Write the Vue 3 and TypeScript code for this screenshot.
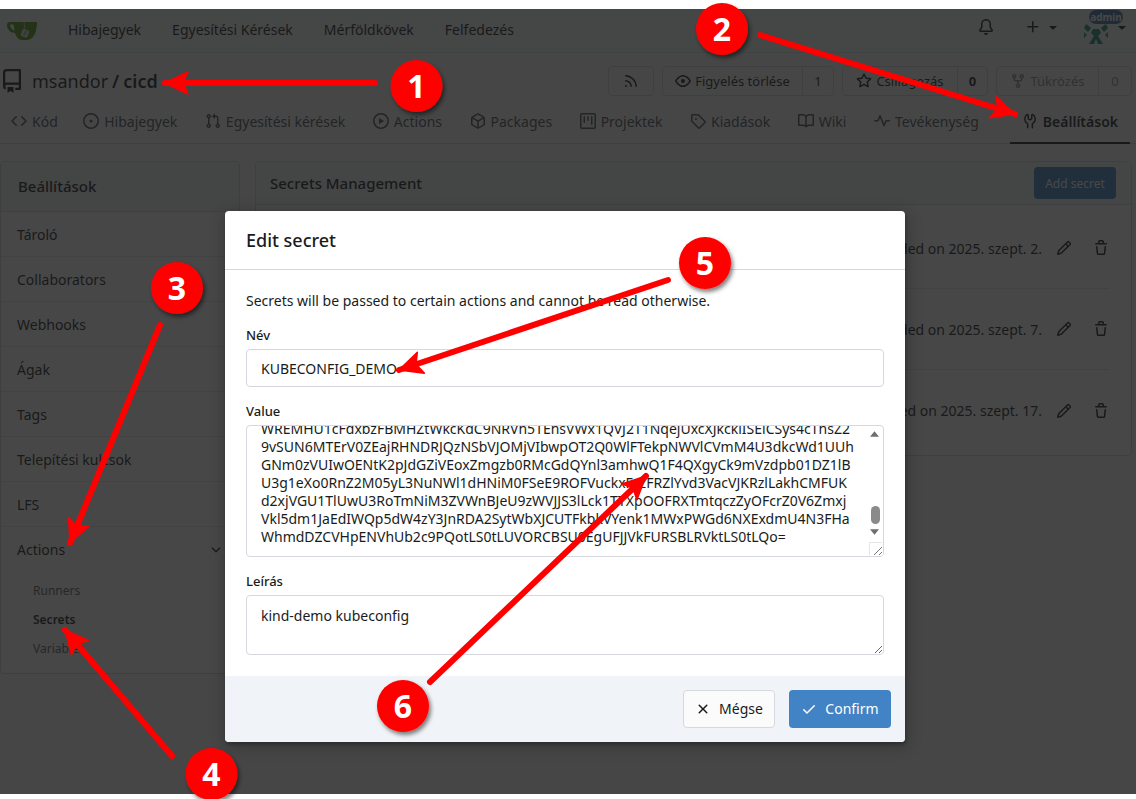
<script setup lang="ts">
const icons: Record<string, string> = {
  repo: "M2 2.5A2.5 2.5 0 0 1 4.5 0h8.75a.75.75 0 0 1 .75.75v12.5a.75.75 0 0 1-.75.75h-2.5a.75.75 0 0 1 0-1.5h1.75v-2h-8a1 1 0 0 0-.714 1.7.75.75 0 1 1-1.072 1.05A2.495 2.495 0 0 1 2 11.5Zm10.5-1h-8a1 1 0 0 0-1 1v6.708A2.486 2.486 0 0 1 4.5 9h8ZM5 12.25a.25.25 0 0 1 .25-.25h3.5a.25.25 0 0 1 .25.25v3.25a.25.25 0 0 1-.4.2l-1.45-1.087a.249.249 0 0 0-.3 0L5.4 15.7a.25.25 0 0 1-.4-.2Z",
  code: "m11.28 3.22 4.25 4.25a.75.75 0 0 1 0 1.06l-4.25 4.25a.749.749 0 0 1-1.275-.326.749.749 0 0 1 .215-.734L13.94 8l-3.72-3.72a.749.749 0 0 1 .326-1.275.749.749 0 0 1 .734.215Zm-6.56 0a.751.751 0 0 1 1.042.018.751.751 0 0 1 .018 1.042L2.06 8l3.72 3.72a.749.749 0 0 1-.326 1.275.749.749 0 0 1-.734-.215L.47 8.53a.75.75 0 0 1 0-1.06Z",
  issue: "M8 9.5a1.5 1.5 0 1 0 0-3 1.5 1.5 0 0 0 0 3ZM8 0a8 8 0 1 1 0 16A8 8 0 0 1 8 0ZM1.5 8a6.5 6.5 0 1 0 13 0 6.5 6.5 0 0 0-13 0Z",
  pr: "M1.5 3.25a2.25 2.25 0 1 1 3 2.122v5.256a2.251 2.251 0 1 1-1.5 0V5.372A2.25 2.25 0 0 1 1.5 3.25Zm5.677-.177L9.573.677A.25.25 0 0 1 10 .854V2.5h1A2.5 2.5 0 0 1 13.5 5v5.628a2.251 2.251 0 1 1-1.5 0V5a1 1 0 0 0-1-1h-1v1.646a.25.25 0 0 1-.427.177L7.177 3.427a.25.25 0 0 1 0-.354ZM3.75 2.5a.75.75 0 1 0 0 1.5.75.75 0 0 0 0-1.5Zm0 9.5a.75.75 0 1 0 0 1.5.75.75 0 0 0 0-1.5Zm8.25.75a.75.75 0 1 0 1.5 0 .75.75 0 0 0-1.5 0Z",
  play: "M8 0a8 8 0 1 1 0 16A8 8 0 0 1 8 0ZM1.5 8a6.5 6.5 0 1 0 13 0 6.5 6.5 0 0 0-13 0Zm4.879-2.773 4.264 2.559a.25.25 0 0 1 0 .428l-4.264 2.559A.25.25 0 0 1 6 10.559V5.442a.25.25 0 0 1 .379-.215Z",
  package: "m8.878.392 5.25 3.045c.54.314.872.89.872 1.514v6.098a1.75 1.75 0 0 1-.872 1.514l-5.25 3.045a1.75 1.75 0 0 1-1.756 0l-5.25-3.045A1.75 1.75 0 0 1 1 11.049V4.951c0-.624.332-1.201.872-1.514L7.122.392a1.75 1.75 0 0 1 1.756 0ZM7.875 1.69l-4.63 2.685L8 7.133l4.755-2.758-4.63-2.685a.248.248 0 0 0-.25 0ZM2.5 5.677v5.372c0 .09.047.171.125.216l4.625 2.683V8.432Zm6.25 8.271 4.625-2.683a.25.25 0 0 0 .125-.216V5.677L8.75 8.432Z",
  project: "M1.75 0h12.5C15.216 0 16 .784 16 1.75v12.5A1.75 1.75 0 0 1 14.25 16H1.75A1.75 1.75 0 0 1 0 14.25V1.75C0 .784.784 0 1.75 0ZM1.5 1.75v12.5c0 .138.112.25.25.25h12.5a.25.25 0 0 0 .25-.25V1.75a.25.25 0 0 0-.25-.25H1.75a.25.25 0 0 0-.25.25ZM11.75 3a.75.75 0 0 1 .75.75v7.5a.75.75 0 0 1-1.5 0v-7.5a.75.75 0 0 1 .75-.75Zm-8.25.75a.75.75 0 0 1 1.5 0v5.5a.75.75 0 0 1-1.5 0ZM8 3a.75.75 0 0 1 .75.75v3.5a.75.75 0 0 1-1.5 0v-3.5A.75.75 0 0 1 8 3Z",
  tag: "M1 7.775V2.75C1 1.784 1.784 1 2.75 1h5.025c.464 0 .91.184 1.238.513l6.25 6.25a1.75 1.75 0 0 1 0 2.474l-5.026 5.026a1.75 1.75 0 0 1-2.474 0l-6.25-6.25A1.752 1.752 0 0 1 1 7.775Zm1.5 0c0 .066.026.13.073.177l6.25 6.25a.25.25 0 0 0 .354 0l5.025-5.025a.25.25 0 0 0 0-.354l-6.25-6.25a.25.25 0 0 0-.177-.073H2.75a.25.25 0 0 0-.25.25ZM6 5a1 1 0 1 1 0 2 1 1 0 0 1 0-2Z",
  book: "M0 1.75A.75.75 0 0 1 .75 1h4.253c1.227 0 2.317.59 3 1.501A3.743 3.743 0 0 1 11.006 1h4.245a.75.75 0 0 1 .75.75v10.5a.75.75 0 0 1-.75.75h-4.507a2.25 2.25 0 0 0-1.591.659l-.622.621a.75.75 0 0 1-1.06 0l-.622-.621A2.25 2.25 0 0 0 5.258 13H.75a.75.75 0 0 1-.75-.75Zm7.251 10.324.004-5.073-.002-2.253A2.25 2.25 0 0 0 5.003 2.5H1.5v9h3.757a3.75 3.75 0 0 1 1.994.574ZM8.755 4.75l-.004 7.322a3.752 3.752 0 0 1 1.992-.572H14.5v-9h-3.495a2.25 2.25 0 0 0-2.25 2.25Z",
  pulse: "M6 2c.306 0 .582.187.696.471L10 10.731l1.304-3.26A.751.751 0 0 1 12 7h3.25a.75.75 0 0 1 0 1.5h-2.742l-1.812 4.528a.751.751 0 0 1-1.392 0L6 4.77 4.696 8.03A.75.75 0 0 1 4 8.5H.75a.75.75 0 0 1 0-1.5h2.742l1.812-4.529A.751.751 0 0 1 6 2Z",
  tools: "M5.433 2.304A4.492 4.492 0 0 0 3.5 6c0 1.598.832 3.002 2.09 3.802.518.328.929.923.902 1.64v.008l-.164 3.337a.75.75 0 1 1-1.498-.073l.163-3.33c.002-.085-.05-.216-.207-.316A5.996 5.996 0 0 1 2 6a5.993 5.993 0 0 1 2.567-4.92 1.482 1.482 0 0 1 1.673-.04c.462.296.76.827.76 1.423v2.82c0 .082.041.16.11.206l.75.51a.25.25 0 0 0 .28 0l.75-.51A.249.249 0 0 0 9 5.282V2.463c0-.596.298-1.127.76-1.423a1.482 1.482 0 0 1 1.673.04A5.993 5.993 0 0 1 14 6a5.996 5.996 0 0 1-2.786 5.068c-.157.1-.209.23-.207.315l.163 3.33a.752.752 0 0 1-1.094.714.75.75 0 0 1-.404-.64l-.164-3.345c-.027-.717.384-1.312.902-1.64A4.495 4.495 0 0 0 12.5 6a4.492 4.492 0 0 0-1.933-3.696c-.024.017-.067.067-.067.16v2.818a1.75 1.75 0 0 1-.767 1.448l-.75.51a1.75 1.75 0 0 1-1.966 0l-.75-.51A1.75 1.75 0 0 1 5.5 5.282V2.463c0-.092-.043-.142-.067-.159Z",
  bell: "M8 16a2 2 0 0 0 1.985-1.75c.017-.137-.097-.25-.235-.25h-3.5c-.138 0-.252.113-.235.25A2 2 0 0 0 8 16ZM3 5a5 5 0 0 1 10 0v2.947c0 .05.015.098.042.139l1.703 2.555A1.519 1.519 0 0 1 13.482 13H2.518a1.516 1.516 0 0 1-1.263-2.36l1.703-2.554A.255.255 0 0 0 3 7.947Zm5-3.5A3.5 3.5 0 0 0 4.5 5v2.947c0 .346-.102.683-.294.97l-1.703 2.556a.017.017 0 0 0-.003.01l.001.006c0 .002.002.004.004.006l.006.004.007.001h10.964l.007-.001.006-.004.004-.006.001-.007a.017.017 0 0 0-.003-.01l-1.703-2.554a1.745 1.745 0 0 1-.294-.97V5A3.5 3.5 0 0 0 8 1.5Z",
  plus: "M7.75 2a.75.75 0 0 1 .75.75V7h4.25a.75.75 0 0 1 0 1.5H8.5v4.25a.75.75 0 0 1-1.5 0V8.5H2.75a.75.75 0 0 1 0-1.5H7V2.75A.75.75 0 0 1 7.75 2Z",
  rss: "M2.002 2.725a.75.75 0 0 1 .797-.699C8.79 2.42 13.58 7.21 13.974 13.201a.75.75 0 0 1-1.497.098 10.502 10.502 0 0 0-9.776-9.776.747.747 0 0 1-.7-.798ZM2.84 7.05h-.002a7.002 7.002 0 0 1 6.113 6.111.75.75 0 0 1-1.49.178 5.503 5.503 0 0 0-4.8-4.8.75.75 0 0 1 .179-1.489ZM2 13a1 1 0 1 1 2 0 1 1 0 0 1-2 0Z",
  eye: "M8 2c1.981 0 3.671.992 4.933 2.078 1.27 1.091 2.187 2.345 2.637 3.023a1.62 1.62 0 0 1 0 1.798c-.45.678-1.367 1.932-2.637 3.023C11.67 13.008 9.981 14 8 14c-1.981 0-3.671-.992-4.933-2.078C1.797 10.83.88 9.576.43 8.898a1.62 1.62 0 0 1 0-1.798c.45-.677 1.367-1.931 2.637-3.022C4.33 2.992 6.019 2 8 2ZM1.679 7.932a.12.12 0 0 0 0 .136c.411.622 1.241 1.75 2.366 2.717C5.176 11.758 6.527 12.5 8 12.5c1.473 0 2.825-.742 3.955-1.715 1.124-.967 1.954-2.096 2.366-2.717a.12.12 0 0 0 0-.136c-.412-.621-1.242-1.75-2.366-2.717C10.824 4.242 9.473 3.5 8 3.5c-1.473 0-2.825.742-3.955 1.715-1.124.967-1.954 2.096-2.366 2.717ZM8 10a2 2 0 1 1-.001-3.999A2 2 0 0 1 8 10Z",
  star: "M8 .25a.75.75 0 0 1 .673.418l1.882 3.815 4.21.612a.75.75 0 0 1 .416 1.279l-3.046 2.97.719 4.192a.751.751 0 0 1-1.088.791L8 12.347l-3.766 1.98a.75.75 0 0 1-1.088-.79l.72-4.194L.818 6.374a.75.75 0 0 1 .416-1.28l4.21-.611L7.327.668A.75.75 0 0 1 8 .25Zm0 2.445L6.615 5.5a.75.75 0 0 1-.564.41l-3.097.45 2.24 2.184a.75.75 0 0 1 .216.664l-.528 3.084 2.769-1.456a.75.75 0 0 1 .698 0l2.77 1.456-.53-3.084a.75.75 0 0 1 .216-.664l2.24-2.183-3.096-.45a.75.75 0 0 1-.564-.41L8 2.694Z",
  fork: "M5 5.372v.878c0 .414.336.75.75.75h4.5a.75.75 0 0 0 .75-.75v-.878a2.25 2.25 0 1 1 1.5 0v.878a2.25 2.25 0 0 1-2.25 2.25h-1.5v2.128a2.251 2.251 0 1 1-1.5 0V8.5h-1.5A2.25 2.25 0 0 1 3.5 6.25v-.878a2.25 2.25 0 1 1 1.5 0ZM5 3.25a.75.75 0 1 0-1.5 0 .75.75 0 0 0 1.5 0Zm6.75.75a.75.75 0 1 0 0-1.5.75.75 0 0 0 0 1.5Zm-3 8.75a.75.75 0 1 0-1.5 0 .75.75 0 0 0 1.5 0Z",
  pencil: "M11.013 1.427a1.75 1.75 0 0 1 2.474 0l1.086 1.086a1.75 1.75 0 0 1 0 2.474l-8.61 8.61c-.21.21-.47.364-.756.445l-3.251.93a.75.75 0 0 1-.927-.928l.929-3.25c.081-.286.235-.547.445-.758l8.61-8.61Zm.176 4.823L9.75 4.81l-6.286 6.287a.253.253 0 0 0-.064.108l-.558 1.953 1.953-.558a.253.253 0 0 0 .108-.064Zm1.238-3.763a.25.25 0 0 0-.354 0L10.811 3.75l1.439 1.44 1.263-1.263a.25.25 0 0 0 0-.354Z",
  trash: "M11 1.75V3h2.25a.75.75 0 0 1 0 1.5H2.75a.75.75 0 0 1 0-1.5H5V1.75C5 .784 5.784 0 6.75 0h2.5C10.216 0 11 .784 11 1.75ZM4.496 6.675l.66 6.6a.25.25 0 0 0 .249.225h5.19a.25.25 0 0 0 .249-.225l.66-6.6a.75.75 0 0 1 1.492.149l-.66 6.6A1.748 1.748 0 0 1 10.595 15h-5.19a1.75 1.75 0 0 1-1.741-1.575l-.66-6.6a.75.75 0 1 1 1.492-.15ZM6.5 1.75V3h3V1.75a.25.25 0 0 0-.25-.25h-2.5a.25.25 0 0 0-.25.25Z",
  x: "M3.72 3.72a.75.75 0 0 1 1.06 0L8 6.94l3.22-3.22a.749.749 0 0 1 1.275.326.749.749 0 0 1-.215.734L9.06 8l3.22 3.22a.749.749 0 0 1-.326 1.275.749.749 0 0 1-.734-.215L8 9.06l-3.22 3.22a.751.751 0 0 1-1.042-.018.751.751 0 0 1-.018-1.042L6.94 8 3.72 4.78a.75.75 0 0 1 0-1.06Z",
  check: "M13.78 4.22a.75.75 0 0 1 0 1.06l-7.25 7.25a.75.75 0 0 1-1.06 0L2.22 9.28a.751.751 0 0 1 .018-1.042.751.751 0 0 1 1.042-.018L6 10.94l6.72-6.72a.75.75 0 0 1 1.06 0Z",
  chevron: "M12.78 5.22a.749.749 0 0 1 0 1.06l-4.25 4.25a.749.749 0 0 1-1.06 0L3.22 6.28a.749.749 0 1 1 1.06-1.06L8 8.939l3.72-3.719a.749.749 0 0 1 1.06 0Z",
  caret: "m4.427 7.427 3.396 3.396a.25.25 0 0 0 .354 0l3.396-3.396A.25.25 0 0 0 11.396 7H4.604a.25.25 0 0 0-.177.427Z",
};

const navItems = ["Hibajegyek", "Egyesítési Kérések", "Mérföldkövek", "Felfedezés"];

const tabs = [
  { icon: "code", label: "Kód" },
  { icon: "issue", label: "Hibajegyek" },
  { icon: "pr", label: "Egyesítési kérések" },
  { icon: "play", label: "Actions" },
  { icon: "package", label: "Packages" },
  { icon: "project", label: "Projektek" },
  { icon: "tag", label: "Kiadások" },
  { icon: "book", label: "Wiki" },
  { icon: "pulse", label: "Tevékenység" },
];

const sideItems = ["Tároló", "Collaborators", "Webhooks", "Ágak", "Tags", "Telepítési kulcsok", "LFS"];

const secrets = [
  { name: "KUBECONFIG", date: "Added on 2025. szept. 2." },
  { name: "KUBECONFIG_DEMO", date: "Added on 2025. szept. 7." },
  { name: "REGISTRY_TOKEN", date: "Added on 2025. szept. 17." },
];

const valueLines = [
  "WREMHU1cFdxbzFBMHZtWkcKdC9NRVh5TEhsVWx1QVJ2T1NqejUxcXJkcklISElCSys4cThsZ2",
  "9vSUN6MTErV0ZEajRHNDRJQzNSbVJOMjVIbwpOT2Q0WlFTekpNWVlCVmM4U3dkcWd1UUh",
  "GNm0zVUIwOENtK2pJdGZiVEoxZmgzb0RMcGdQYnl3amhwQ1F4QXgyCk9mVzdpb01DZ1lB",
  "U3g1eXo0RnZ2M05yL3NuNWl1dHNiM0FSeE9ROFVuckxFczFRZlYvd3VacVJKRzlLakhCMFUK",
  "d2xjVGU1TlUwU3RoTmNiM3ZVWnBJeU9zWVJJS3lLck1TTXpOOFRXTmtqczZyOFcrZ0V6Zmxj",
  "Vkl5dm1JaEdIWQp5dW4zY3JnRDA2SytWbXJCUTFkbkVYenk1MWxPWGd6NXExdmU4N3FHa",
  "WhmdDZCVHpENVhUb2c9PQotLS0tLUVORCBSU0EgUFJJVkFURSBLRVktLS0tLQo=",
];

const marks = [
  { n: 1, cx: 416.5, cy: 86, x1: 375, y1: 83, x2: 165, y2: 83 },
  { n: 2, cx: 722, cy: 29, x1: 760, y1: 35, x2: 1015, y2: 114 },
  { n: 3, cx: 177, cy: 288, x1: 160, y1: 325, x2: 70, y2: 543 },
  { n: 4, cx: 211.5, cy: 774, x1: 172, y1: 756, x2: 65, y2: 630 },
  { n: 5, cx: 705, cy: 263, x1: 668, y1: 280, x2: 399, y2: 370 },
  { n: 6, cx: 403, cy: 706, x1: 430, y1: 682, x2: 646, y2: 476 },
];

// arrow head with a small notch in its back
function head(m: { x1: number; y1: number; x2: number; y2: number }): string {
  const a = Math.atan2(m.y2 - m.y1, m.x2 - m.x1);
  const cos = Math.cos(a);
  const sin = Math.sin(a);
  const l = 23;
  const w = 11;
  const bx = m.x2 - l * cos;
  const by = m.y2 - l * sin;
  const nx = m.x2 - (l - 5) * cos;
  const ny = m.y2 - (l - 5) * sin;
  return `${m.x2},${m.y2} ${bx - sin * w},${by + cos * w} ${nx},${ny} ${bx + sin * w},${by - cos * w}`;
}
</script>

<template>
  <div class="page">
    <div class="screen">
      <nav class="navbar">
        <svg class="logo" viewBox="0 0 30 20" width="30" height="20">
          <path
            fill-rule="evenodd"
            d="M3 1h27c0 9-3 18-10 18h-5c-4 0-6-4-7-7C3 12 0 8 0 4c0-2 1-3 3-3Zm0 2.500C3 6 5 9 7.500 9.500L6.500 3.500Z"
            fill="#4f9a10"
          />
          <path d="M17 1l1 8" stroke="#bbb" fill="none" />
          <rect x="14.500" y="8.500" width="7" height="7.500" rx="1.500" fill="#ddd" transform="rotate(22 18 12)" />
          <path d="M17 14l2-4" stroke="#4f9a10" fill="none" />
        </svg>
        <div class="nav-links">
          <a v-for="item in navItems" :key="item">{{ item }}</a>
        </div>
        <div class="nav-right">
          <svg class="ico" viewBox="0 0 16 16"><path :d="icons.bell" /></svg>
          <span class="plus-group">
            <svg class="ico" viewBox="0 0 16 16"><path :d="icons.plus" /></svg>
            <svg class="ico" viewBox="0 0 16 16"><path :d="icons.caret" /></svg>
          </span>
          <span class="avatar-group">
            <svg class="avatar" viewBox="0 0 24 22">
              <path
                d="M2 2l5 4-3 4-4-4zM22 2l2 4-4 4-3-4zM9 7h6l2 4-3 3 5 8h-5l-2-5-2 5H5l5-8-3-3zM0 10l3 3-3 3zM24 10v6l-3-3z"
                fill="#1f8a70"
              />
            </svg>
            <span class="badge">admin</span>
            <svg class="ico" viewBox="0 0 16 16"><path :d="icons.caret" /></svg>
          </span>
        </div>
      </nav>

      <div class="repo-head">
        <div class="repo-title">
          <svg class="repo-icon" viewBox="0 0 16 16"><path :d="icons.repo" /></svg>
          <span>msandor</span><b class="slash">/</b><b>cicd</b>
        </div>
        <div class="repo-buttons">
          <span class="btn-box rss"><svg class="ico" viewBox="0 0 16 16"><path :d="icons.rss" /></svg></span>
          <span class="btn-box watch">
            <span class="btn-main"><svg class="ico" viewBox="0 0 16 16"><path :d="icons.eye" /></svg>Figyelés törlése</span>
            <span class="btn-count">1</span>
          </span>
          <span class="btn-box star">
            <span class="btn-main"><svg class="ico" viewBox="0 0 16 16"><path :d="icons.star" /></svg>Csillagozás</span>
            <span class="btn-count">0</span>
          </span>
          <span class="btn-box fork off">
            <span class="btn-main"><svg class="ico" viewBox="0 0 16 16"><path :d="icons.fork" /></svg>Tükrözés</span>
            <span class="btn-count">0</span>
          </span>
        </div>
      </div>

      <div class="tabs">
        <a v-for="t in tabs" :key="t.label" class="tab">
          <svg class="ico" viewBox="0 0 16 16"><path :d="icons[t.icon]" /></svg>{{ t.label }}
        </a>
        <a class="tab active">
          <svg class="ico" viewBox="0 0 16 16"><path :d="icons.tools" /></svg>Beállítások
        </a>
      </div>

      <div class="content">
        <aside class="side">
          <div class="side-head">Beállítások</div>
          <a v-for="s in sideItems" :key="s" class="side-item">{{ s }}</a>
          <div class="side-group">
            <div class="side-group-title">
              Actions
              <svg class="ico small" viewBox="0 0 16 16"><path :d="icons.chevron" /></svg>
            </div>
            <a class="sub">Runners</a>
            <a class="sub current">Secrets</a>
            <a class="sub">Variables</a>
          </div>
        </aside>

        <section class="panel">
          <div class="panel-head">
            <span>Secrets Management</span>
            <span class="add-btn">Add secret</span>
          </div>
          <div class="panel-body">
            <div v-for="s in secrets" :key="s.name" class="secret-row">
              <span class="secret-name">{{ s.name }}</span>
              <span class="secret-date">{{ s.date }}</span>
              <svg class="ico" viewBox="0 0 16 16"><path :d="icons.pencil" /></svg>
              <svg class="ico" viewBox="0 0 16 16"><path :d="icons.trash" /></svg>
            </div>
          </div>
        </section>
      </div>

      <div class="dimmer"></div>

      <div class="modal">
        <div class="modal-head">Edit secret</div>
        <div class="modal-body">
          <p class="hint">Secrets will be passed to certain actions and cannot be read otherwise.</p>
          <label class="field-label">Név</label>
          <input class="input" value="KUBECONFIG_DEMO" />
          <label class="field-label">Value</label>
          <div class="value-box">
            <div class="value-text">
              <div v-for="line in valueLines" :key="line">{{ line }}</div>
            </div>
            <svg class="scroll-up" viewBox="0 0 10 6" width="9" height="6"><path d="M5 0l5 6H0z" /></svg>
            <span class="scroll-thumb"></span>
            <svg class="scroll-down" viewBox="0 0 10 6" width="9" height="6"><path d="M0 0h10L5 6z" /></svg>
            <svg class="grip" viewBox="0 0 13 13" width="13" height="13"><path d="M12 4L4 12M12 9L9 12" stroke="#777" fill="none" /></svg>
          </div>
          <label class="field-label">Leírás</label>
          <textarea class="desc">kind-demo kubeconfig</textarea>
        </div>
        <div class="modal-foot">
          <span class="foot-btn cancel">
            <svg class="ico" viewBox="0 0 16 16"><path :d="icons.x" /></svg>Mégse
          </span>
          <span class="foot-btn confirm">
            <svg class="ico" viewBox="0 0 16 16"><path :d="icons.check" /></svg>Confirm
          </span>
        </div>
      </div>
    </div>

    <svg class="marks" viewBox="0 0 1136 799">
      <defs>
        <filter id="mark-shadow" x="-30%" y="-30%" width="170%" height="170%">
          <feDropShadow dx="2" dy="3" stdDeviation="2" flood-color="#000" flood-opacity="0.5" />
        </filter>
      </defs>
      <g v-for="m in marks" :key="m.n">
        <line :x1="m.x1" :y1="m.y1" :x2="m.x2" :y2="m.y2" stroke="#f00" stroke-width="6" stroke-linecap="round" />
        <polygon :points="head(m)" fill="#f00" stroke="#f00" stroke-width="1.500" stroke-linejoin="round" />
        <circle :cx="m.cx" :cy="m.cy" r="26" fill="#f00" filter="url(#mark-shadow)" />
        <text :x="m.cx" :y="m.cy + 12" class="mark-num" text-anchor="middle">{{ m.n }}</text>
      </g>
    </svg>
  </div>
</template>

<style>
html,
body {
  margin: 0;
  background: #fff;
}
</style>

<style scoped>
.page {
  width: 1136px;
  height: 799px;
  position: relative;
  overflow: hidden;
  background: #fff;
  padding: 9px 0 5px;
  box-sizing: border-box;
  font-family: "Noto Sans", sans-serif;
  font-size: 14px;
  color: #181c21;
}
.screen {
  position: relative;
  height: 785px;
  overflow: hidden;
  background: #fbfbfc;
}
.ico {
  width: 16px;
  height: 16px;
  fill: currentColor;
  flex: none;
}
.ico.small {
  width: 14px;
  height: 14px;
}

.navbar {
  height: 44px;
  box-sizing: border-box;
  display: flex;
  align-items: center;
  padding-left: 7px;
  background: #f6f7fa;
  border-bottom: 1px solid #e0e3e9;
}
.logo {
  flex: none;
}
.nav-links {
  display: flex;
  gap: 31px;
  margin: 0 0 3px 31px;
}
.nav-right {
  margin-left: auto;
  align-self: flex-start;
  height: 36px;
  display: flex;
  align-items: center;
  padding-right: 6px;
}
.plus-group {
  display: flex;
  align-items: center;
  gap: 4px;
  margin-left: 31px;
}
.avatar-group {
  height: 36px;
  display: flex;
  align-items: center;
  position: relative;
  margin-left: 23px;
}
.avatar {
  width: 24px;
  height: 22px;
  margin: 12px 6px 0 0;
}
.badge {
  position: absolute;
  left: 5px;
  top: 1px;
  width: 34px;
  text-align: center;
  background: #3f72a8;
  color: #fff;
  border-radius: 8px;
  font-size: 10px;
  font-weight: 700;
  line-height: 14px;
}

.repo-head {
  display: flex;
  align-items: center;
  justify-content: space-between;
  padding: 13px 4px 0 0;
  height: 30px;
}
.repo-title {
  display: flex;
  align-items: center;
  font-size: 18px;
}
.repo-title b {
  font-weight: 600;
}
.repo-icon {
  width: 24px;
  height: 24px;
  fill: currentColor;
  margin-right: 8px;
  flex: none;
}
.repo-title .slash {
  margin: 0 4px;
}
.repo-buttons {
  display: flex;
  gap: 8px;
  font-size: 13px;
}
.btn-box {
  height: 30px;
  box-sizing: border-box;
  display: flex;
  align-items: center;
  border: 1px solid #d5d8df;
  border-radius: 4px;
  background: #fbfbfc;
}
.rss {
  width: 46px;
  justify-content: center;
}
.btn-main {
  display: flex;
  align-items: center;
  justify-content: center;
  gap: 4px;
  height: 100%;
  flex: 1;
}
.btn-count {
  height: 100%;
  display: flex;
  align-items: center;
  justify-content: center;
  border-left: 1px solid #d5d8df;
}
.watch {
  width: 172px;
}
.watch .btn-count {
  width: 30px;
}
.star {
  width: 146px;
}
.star .btn-count {
  width: 29px;
  font-weight: 700;
}
.fork {
  width: 136px;
}
.fork .btn-count {
  width: 32px;
}
.off {
  color: #8c8f94;
}

.tabs {
  height: 44px;
  box-sizing: border-box;
  margin-top: 4px;
  display: flex;
  align-items: stretch;
  padding-left: 11px;
  gap: 27.5px;
  border-bottom: 1px solid #d5d8df;
  color: #4a4f56;
  white-space: nowrap;
}
.tab {
  display: flex;
  align-items: center;
  gap: 5px;
  border-bottom: 2px solid transparent;
  margin-bottom: -1px;
}
.tab:first-child {
  margin-right: -2px;
}
.tab.active {
  margin-left: auto;
  margin-right: 6px;
  padding: 0 12px;
  font-weight: 600;
  color: #181c21;
  border-bottom-color: #181c21;
}

.content {
  display: flex;
  align-items: flex-start;
  gap: 15px;
  padding: 17px 4px 0 0;
}
.side {
  width: 240px;
  flex: none;
  box-sizing: border-box;
  border: 1px solid #d5d8df;
  border-radius: 4px;
  background: #fff;
  overflow: hidden;
}
.side-head {
  height: 50px;
  box-sizing: border-box;
  display: flex;
  align-items: center;
  padding: 0 0 1px 17px;
  font-size: 15px;
  font-weight: 500;
  background: #f0f2f5;
  border-bottom: 1px solid #d5d8df;
}
.side-item {
  display: flex;
  align-items: center;
  height: 45px;
  box-sizing: border-box;
  padding-left: 16px;
  border-bottom: 1px solid #e3e5ea;
}
.side-group {
  height: 146px;
}
.side-group-title {
  height: 45px;
  display: flex;
  align-items: center;
  justify-content: space-between;
  padding: 0 16px;
}
.sub {
  display: block;
  height: 29px;
  line-height: 29px;
  padding-left: 32px;
  font-size: 12px;
  color: #5c6067;
}
.sub:first-of-type {
  margin-top: 4px;
}
.sub.current {
  color: #181c21;
  font-weight: 600;
}

.panel {
  flex: 1;
  border: 1px solid #d5d8df;
  border-radius: 4px;
  background: #fff;
  overflow: hidden;
}
.panel-head {
  height: 42px;
  display: flex;
  align-items: center;
  justify-content: space-between;
  padding: 0 15px 0 14px;
  font-size: 15px;
  font-weight: 500;
  background: #f0f2f5;
  border-bottom: 1px solid #d5d8df;
}
.add-btn {
  width: 82px;
  height: 32px;
  display: flex;
  align-items: center;
  justify-content: center;
  border-radius: 4px;
  background: #4183c4;
  color: #fff;
  font-size: 12px;
  font-weight: 400;
}
.panel-body {
  padding: 3px 22px 4px 15px;
}
.secret-row {
  height: 81px;
  box-sizing: border-box;
  display: flex;
  align-items: center;
  gap: 14px;
  border-bottom: 1px solid #e3e5ea;
}
.secret-row:last-child {
  border-bottom: 0;
}
.secret-row .ico + .ico {
  margin-left: 7px;
}
.secret-name {
  margin-right: auto;
}

.dimmer {
  position: absolute;
  inset: 0;
  background: rgba(25, 25, 25, 0.8);
}

.modal {
  position: absolute;
  top: 202px;
  left: 225px;
  width: 680px;
  height: 531px;
  display: flex;
  flex-direction: column;
  background: #fff;
  border-radius: 4px;
  overflow: hidden;
  box-shadow: 1px 3px 3px rgba(0, 0, 0, 0.2), 1px 3px 15px 2px rgba(0, 0, 0, 0.2);
}
.modal-head {
  height: 59px;
  box-sizing: border-box;
  flex: none;
  display: flex;
  align-items: center;
  padding-left: 21px;
  font-size: 18px;
  font-weight: 500;
  border-bottom: 1px solid #d5d8df;
}
.modal-body {
  flex: 1;
  padding: 21px 21px 0;
}
.hint {
  margin: 0 0 15px;
  line-height: 20px;
}
.field-label {
  display: block;
  font-size: 13px;
  line-height: 18px;
  margin-bottom: 5px;
  font-weight: 500;
}
.input {
  display: block;
  width: 100%;
  height: 38px;
  box-sizing: border-box;
  border: 1px solid #d5d8df;
  border-radius: 4px;
  padding: 0 14px;
  margin-bottom: 15px;
  font: inherit;
  color: inherit;
}
.value-box {
  position: relative;
  height: 132px;
  box-sizing: border-box;
  border: 1px solid #d5d8df;
  border-radius: 4px;
  overflow: hidden;
  margin-bottom: 15px;
}
.value-text {
  margin-top: -6px;
  padding-left: 14px;
  line-height: 18px;
  white-space: nowrap;
}
.scroll-up,
.scroll-down {
  position: absolute;
  right: 4px;
  fill: #6e6e6e;
}
.scroll-up {
  top: 5px;
}
.scroll-down {
  bottom: 21px;
}
.scroll-thumb {
  position: absolute;
  right: 3px;
  top: 80px;
  width: 9px;
  height: 18px;
  border-radius: 5px;
  background: #8a8a8a;
}
.grip {
  position: absolute;
  right: 0;
  bottom: 0;
  background: #fff;
  box-shadow: -1px -1px 0 #e3e5ea;
}
.desc {
  display: block;
  width: 100%;
  height: 60px;
  box-sizing: border-box;
  border: 1px solid #d5d8df;
  border-radius: 4px;
  padding: 10px 14px;
  font: inherit;
  line-height: 20px;
  color: inherit;
  outline: 0;
}
.modal-foot {
  height: 66px;
  flex: none;
  display: flex;
  align-items: center;
  justify-content: flex-end;
  gap: 14px;
  padding-right: 14px;
  background: #f0f3f7;
}
.foot-btn {
  height: 38px;
  box-sizing: border-box;
  display: flex;
  align-items: center;
  justify-content: center;
  gap: 8px;
  padding-bottom: 1px;
  border-radius: 4px;
}
.cancel {
  width: 92px;
  background: #fbfbfc;
  border: 1px solid #d5d8df;
}
.confirm {
  width: 102px;
  background: #4183c4;
  color: #fff;
}

.marks {
  position: absolute;
  inset: 0;
  width: 1136px;
  height: 799px;
  pointer-events: none;
}
.mark-num {
  font-family: "Noto Sans", sans-serif;
  font-size: 32px;
  font-weight: 700;
  fill: #fff;
}
</style>
